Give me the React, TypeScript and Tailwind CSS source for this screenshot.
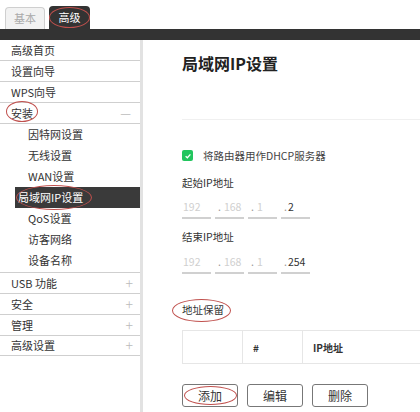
import React from 'react'

const font = "font-['Noto_Sans_CJK_SC','Noto_Sans',sans-serif]"

function Mark({ className }: { className: string }) {
  // hand-drawn red ellipse lying over the screenshot
  return <span className={`pointer-events-none absolute rounded-[50%] border border-[#c0504d] ${className}`} />
}

const topItems = ['高级首页', '设置向导', 'WPS向导']
const subItems = ['因特网设置', '无线设置', 'WAN设置', '局域网IP设置', 'QoS设置', '访客网络', '设备名称']
const bottomItems = ['USB 功能', '安全', '管理', '高级设置']

function IpRow({ last }: { last: string }) {
  const parts = ['192', '168', '1']
  return (
    <div className="flex h-[23px] gap-[4px]">
      {parts.map((p, i) => (
        <div key={p} className={`flex w-[29px] items-center border-b-2 border-[#d0d0d0] text-[10.5px] text-[#cfcfcf] ${i > 0 ? 'pl-[3px]' : 'pl-[1px]'}`}>
          {i > 0 && <span className="mr-[3px] text-[#999]">.</span>}
          {p}
        </div>
      ))}
      <div className="flex w-[29px] items-center border-b-2 border-[#d0d0d0] pl-[3px] text-[10.5px] text-[#333]">
        <span className="mr-[1px] text-[#999]">.</span>
        {last}
      </div>
    </div>
  )
}

export default function App() {
  return (
    <div className={`flex h-[412px] w-[420px] flex-col overflow-hidden bg-white ${font}`}>

      {/* tabs */}
      <div className="flex h-[29px] items-end gap-[4px] pl-[5px]">
        <div className="flex h-[22px] w-[40px] items-center justify-center rounded-t-[4px] border border-b-0 border-[#cfcfcf] bg-[#f2f2f2] text-[11px] text-[#aaa]">
          基本
        </div>
        <div className="relative flex h-[23px] w-[41px] items-center justify-center rounded-t-[4px] bg-[#333] text-[11px] text-white">
          高级
          <Mark className="left-[0px] top-[1px] h-[21px] w-[41px]" />
        </div>
      </div>
      <div className="h-[11px] bg-[#333]" />

      <div className="flex flex-1">
        {/* sidebar */}
        <div className="w-[143px] shrink-0 border-r-[3px] border-[#e2e2e2] text-[11px] text-[#333]">
          {topItems.map(t => (
            <div key={t} className="flex h-[21px] items-center border-b border-[#cfcfcf] pl-[11px]">{t}</div>
          ))}
          <div className="flex h-[21px] items-center justify-between border-b border-[#cfcfcf] pl-[11px] pr-[9px]">
            <span className="relative">
              安装
              <Mark className="-left-[5px] -top-[4px] h-[21px] w-[32px]" />
            </span>
            <span className="text-[12px] text-[#bbb]">—</span>
          </div>
          {subItems.map(t => (
            t === '局域网IP设置' ? (
              <div key={t} className="relative ml-[15px] flex h-[21px] items-center bg-[#3a3a3a] pl-[3px] text-white">
                {t}
                <Mark className="left-[1px] -top-[2px] h-[25px] w-[76px]" />
              </div>
            ) : (
              <div key={t} className="flex h-[21px] items-center pl-[28px]">{t}</div>
            )
          ))}
          <div className="h-px" />
          {bottomItems.map(t => (
            <div key={t} className="flex h-[21px] items-center justify-between border-t border-[#cfcfcf] pl-[11px] pr-[7px] last:border-b">
              <span>{t}</span>
              <span className="text-[14px] font-light text-[#bbb]">+</span>
            </div>
          ))}
        </div>

        {/* main */}
        <div className="flex-1 pl-[39px] text-[10.5px] text-[#333]">
          <div className="h-[80px] border-b border-[#f0f0f0]">
            <h1 className="pt-[12px] text-[16px] font-bold leading-[22px] text-[#222]">局域网IP设置</h1>
          </div>

          <div className="mt-[26px] flex h-[19px] items-center">
            <span className="flex h-[11px] w-[11px] items-center justify-center rounded-[2px] bg-[#22c55e]">
              <svg viewBox="0 0 10 10" className="h-[8px] w-[8px]">
                <path d="M2 5.2 L4.2 7.2 L8 3" fill="none" stroke="white" strokeWidth="1.6" />
              </svg>
            </span>
            <span className="ml-[10px] text-[#444]">将路由器用作DHCP服务器</span>
          </div>

          <div className="mt-[9px] flex h-[18px] items-center">起始IP地址</div>
          <div className="mt-[4px]"><IpRow last="2" /></div>

          <div className="mt-[9px] flex h-[18px] items-center">结束IP地址</div>
          <div className="mt-[5px]"><IpRow last="254" /></div>

          <div className="mt-[27px] flex h-[18px] items-center">
            <span className="relative">
              地址保留
              <Mark className="-left-[10px] -top-[3px] h-[23px] w-[59px]" />
            </span>
          </div>

          <div className="mt-[11px] flex h-[34px] border border-r-0 border-[#e6e6e6] text-[10px] font-semibold">
            <div className="w-[60px] border-r border-[#e6e6e6]" />
            <div className="flex w-[60px] items-center border-r border-[#e6e6e6] pl-[10px]">#</div>
            <div className="flex flex-1 items-center pl-[10px]">IP地址</div>
          </div>

          <div className="mt-[20px] flex gap-[9px] text-[12px]">
            <button className="relative flex h-[23px] w-[56px] items-center justify-center rounded-[3px] border border-[#777] bg-white">
              添加
              <Mark className="left-[1px] top-[1px] h-[19px] w-[53px]" />
            </button>
            <button className="flex h-[23px] w-[56px] items-center justify-center rounded-[3px] border border-[#777] bg-white">编辑</button>
            <button className="flex h-[23px] w-[56px] items-center justify-center rounded-[3px] border border-[#777] bg-white">删除</button>
          </div>
        </div>
      </div>
    </div>
  )
}
